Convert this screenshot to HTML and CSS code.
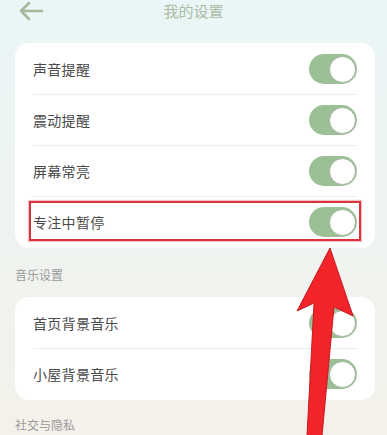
FILE: index.html
```html
<!DOCTYPE html>
<html lang="zh">
<head>
<meta charset="utf-8">
<link rel="stylesheet" href="styles.css">
</head>
<body>
<div class="page">
  <header class="topbar">
    <div class="back">
      <svg width="26" height="22" viewBox="0 0 26 22"><path d="M24 11 H3 M11 3 L3 11 L11 19" fill="none" stroke="#a3b99c" stroke-width="2.6" stroke-linecap="round" stroke-linejoin="round"/></svg>
    </div>
    <div class="title">我的设置</div>
    <div></div>
  </header>
  <main class="content">
    <section class="card card-first">
      <div class="row"><span class="label">声音提醒</span><span class="toggle"><span class="knob"></span></span></div>
      <div class="row"><span class="label">震动提醒</span><span class="toggle"><span class="knob"></span></span></div>
      <div class="row"><span class="label">屏幕常亮</span><span class="toggle"><span class="knob"></span></span></div>
      <div class="row highlighted"><span class="label">专注中暂停</span><span class="toggle"><span class="knob"></span></span><span class="redbox"></span></div>
    </section>
    <div class="section-title">音乐设置</div>
    <section class="card">
      <div class="row"><span class="label">首页背景音乐</span><span class="toggle"><span class="knob"></span></span></div>
      <div class="row"><span class="label">小屋背景音乐</span><span class="toggle"><span class="knob"></span></span></div>
    </section>
    <div class="section-title second">社交与隐私</div>
  </main>
  <svg class="arrow" width="387" height="435" viewBox="0 0 387 435">
    <polygon points="330,248 353,316 334,307 322,436 307,436 314,303 297,311" fill="#f3232a" stroke="#c21c22" stroke-width="1" stroke-linejoin="round"/>
  </svg>
</div>
</body>
</html>
```

FILE: styles.css
```css
* { box-sizing: border-box; }
html, body { margin: 0; padding: 0; }
body {
  width: 387px;
  height: 435px;
  overflow: hidden;
  font-family: "Noto Sans CJK SC", "Noto Sans", sans-serif;
}
.page {
  position: relative;
  width: 387px;
  height: 435px;
  background: linear-gradient(180deg, #eaf6f7 0%, #eef4f1 45%, #f4f1ea 100%);
  overflow: hidden;
}
.topbar {
  display: grid;
  grid-template-columns: 70px 1fr 70px;
  align-items: center;
  height: 22px;
}
.back {
  padding-left: 18px;
  display: flex;
  align-items: center;
  height: 22px;
}
.back svg { display: block; }
.title {
  text-align: center;
  font-size: 15px;
  line-height: 22px;
  color: #a9bba4;
}
.content {
  padding: 21px 12px 0 15px;
}
.card {
  background: #ffffff;
  border-radius: 14px;
  padding: 1px 18px;
  width: 360px;
}
.row {
  position: relative;
  display: flex;
  align-items: center;
  justify-content: space-between;
  height: 51px;
  border-bottom: 1px solid #eceeed;
}
.row:last-child { border-bottom: none; height: 50px; }
.label {
  font-size: 14px;
  color: #4a4a4a;
  letter-spacing: 0.3px;
}
.toggle {
  position: relative;
  width: 48px;
  height: 30px;
  border-radius: 15px;
  background: #9cc096;
  flex: none;
}
.knob {
  position: absolute;
  right: 1px;
  top: 1.5px;
  width: 27px;
  height: 27px;
  border-radius: 50%;
  background: #ffffff;
  border: 1px solid #a4b2a1;
}
.redbox {
  position: absolute;
  left: -4px;
  right: -4px;
  top: 4px;
  height: 40px;
  border: 2px solid #d9343c;
  box-shadow: 0 0 1px 1px rgba(230, 120, 125, 0.45);
  pointer-events: none;
}
.section-title {
  font-size: 12px;
  line-height: 17px;
  color: #9a9a9a;
  padding: 18px 0 14px;
}
.section-title.second {
  padding-top: 16px;
}
.arrow {
  position: absolute;
  left: 0;
  top: 0;
}
```
